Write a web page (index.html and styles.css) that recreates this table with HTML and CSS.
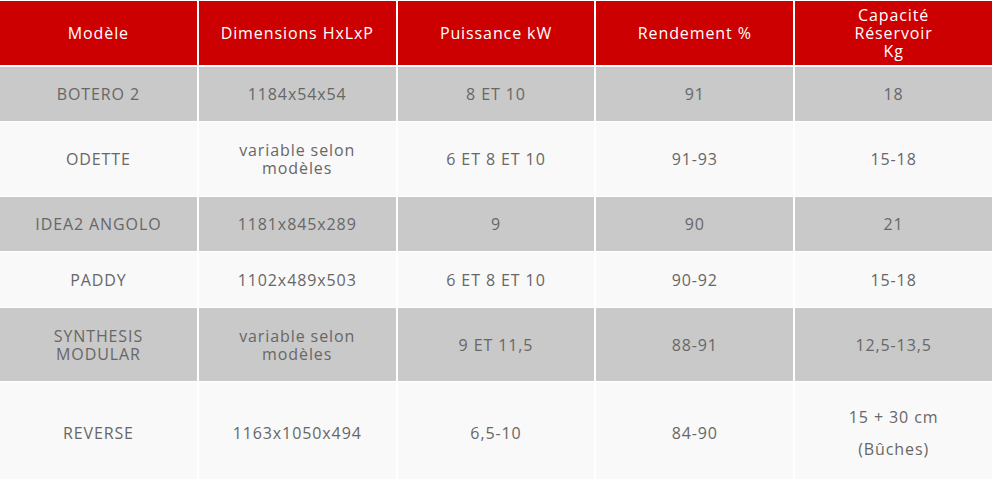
FILE: index.html
```html
<!DOCTYPE html>
<html lang="fr">
<head>
<meta charset="utf-8">
<title>Tableau des modèles</title>
<link rel="stylesheet" href="styles.css">
</head>
<body>
<div class="specs">
  <div class="cell head">Modèle</div>
  <div class="cell head">Dimensions HxLxP</div>
  <div class="cell head">Puissance kW</div>
  <div class="cell head">Rendement %</div>
  <div class="cell head">Capacité<br>Réservoir<br>Kg</div>

  <div class="cell dark">BOTERO 2</div>
  <div class="cell dark">1184x54x54</div>
  <div class="cell dark">8 ET 10</div>
  <div class="cell dark">91</div>
  <div class="cell dark">18</div>

  <div class="cell light">ODETTE</div>
  <div class="cell light">variable selon<br>modèles</div>
  <div class="cell light">6 ET 8 ET 10</div>
  <div class="cell light">91-93</div>
  <div class="cell light">15-18</div>

  <div class="cell dark">IDEA2 ANGOLO</div>
  <div class="cell dark">1181x845x289</div>
  <div class="cell dark">9</div>
  <div class="cell dark">90</div>
  <div class="cell dark">21</div>

  <div class="cell light">PADDY</div>
  <div class="cell light">1102x489x503</div>
  <div class="cell light">6 ET 8 ET 10</div>
  <div class="cell light">90-92</div>
  <div class="cell light">15-18</div>

  <div class="cell dark">SYNTHESIS<br>MODULAR</div>
  <div class="cell dark">variable selon<br>modèles</div>
  <div class="cell dark">9 ET 11,5</div>
  <div class="cell dark">88-91</div>
  <div class="cell dark">12,5-13,5</div>

  <div class="cell light">REVERSE</div>
  <div class="cell light">1163x1050x494</div>
  <div class="cell light">6,5-10</div>
  <div class="cell light">84-90</div>
  <div class="cell light"><p class="para">15 + 30 cm</p><p class="para">(Bûches)</p></div>
</div>
</body>
</html>
```
FILE: styles.css
```css
html, body {
  margin: 0;
  padding: 0;
  background: #ffffff;
}
body {
  font-family: "Open Sans", "Noto Sans", sans-serif;
  font-size: 16px;
  letter-spacing: 0.9px;
  color: #676767;
  overflow: hidden;
}
.specs {
  display: grid;
  grid-template-columns: repeat(5, 1fr);
  grid-template-rows: 65px 54px 74px 54px 55px 73px 102px;
  column-gap: 2px;
  row-gap: 1px;
  padding-top: 1px;
  background: #ffffff;
}
.cell {
  display: flex;
  flex-direction: column;
  align-items: center;
  justify-content: center;
  text-align: center;
  line-height: 18px;
}
.head {
  background: #cc0000;
  color: #ffffff;
  line-height: 18px;
  margin-bottom: 1px;
}
.dark {
  background: #c9c9c9;
}
.light {
  background: #f9f9f9;
}
.para {
  margin: 0;
  line-height: 32px;
}
```
